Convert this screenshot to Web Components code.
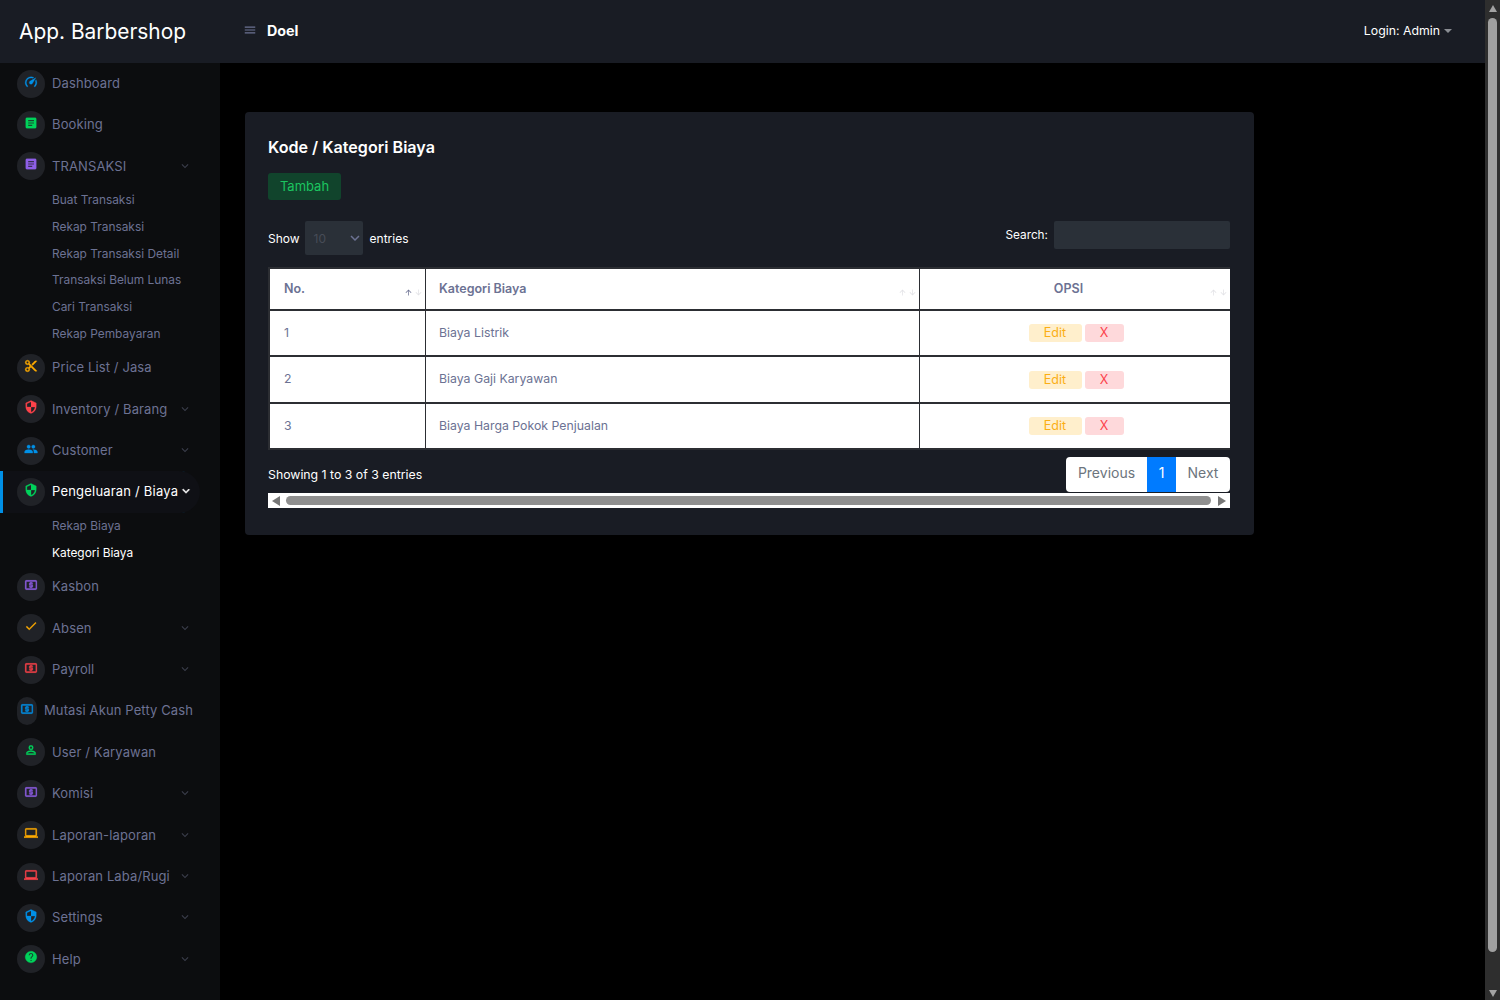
<!DOCTYPE html>
<html lang="en">
<head>
<meta charset="UTF-8">
<title>App. Barbershop</title>
<style>
  html { background: #000; }
  body { margin: 0; height: 100vh; overflow: hidden; display: flex; background: #000; font-family: Inter, "Liberation Sans", sans-serif; color: #fff; }
  app-shell { flex: 1; min-width: 0; }
</style>
</head>
<body>
<app-shell>
  <top-bar slot="top" brand="App. Barbershop" user="Doel" login="Login: Admin"></top-bar>
  <side-bar slot="side">
    <nav-item icon="speed" color="#0090e7" label="Dashboard"></nav-item>
    <nav-item icon="note" color="#00d25b" label="Booking"></nav-item>
    <nav-item icon="note" color="#8f5fe8" label="TRANSAKSI" chevron>
      <sub-item>Buat Transaksi</sub-item>
      <sub-item>Rekap Transaksi</sub-item>
      <sub-item>Rekap Transaksi Detail</sub-item>
      <sub-item>Transaksi Belum Lunas</sub-item>
      <sub-item>Cari Transaksi</sub-item>
      <sub-item>Rekap Pembayaran</sub-item>
    </nav-item>
    <nav-item icon="cut" color="#ffab00" label="Price List / Jasa"></nav-item>
    <nav-item icon="shield" color="#fc424a" label="Inventory / Barang" chevron></nav-item>
    <nav-item icon="people" color="#0090e7" label="Customer" chevron></nav-item>
    <nav-item icon="shield" color="#00d25b" label="Pengeluaran / Biaya" chevron active>
      <sub-item>Rekap Biaya</sub-item>
      <sub-item active>Kategori Biaya</sub-item>
    </nav-item>
    <nav-item icon="cash" color="#8f5fe8" label="Kasbon"></nav-item>
    <nav-item icon="check" color="#ffab00" label="Absen" chevron></nav-item>
    <nav-item icon="cash" color="#fc424a" label="Payroll" chevron></nav-item>
    <nav-item icon="cash" color="#0090e7" label="Mutasi Akun Petty Cash" squeezed></nav-item>
    <nav-item icon="user" color="#00d25b" label="User / Karyawan"></nav-item>
    <nav-item icon="cash" color="#8f5fe8" label="Komisi" chevron></nav-item>
    <nav-item icon="laptop" color="#ffab00" label="Laporan-laporan" chevron></nav-item>
    <nav-item icon="laptop" color="#fc424a" label="Laporan Laba/Rugi" chevron></nav-item>
    <nav-item icon="shield" color="#0090e7" label="Settings" chevron></nav-item>
    <nav-item icon="help" color="#00d25b" label="Help" chevron></nav-item>
  </side-bar>
  <category-card slot="main"></category-card>
</app-shell>
<page-scrollbar></page-scrollbar>

<script>
const ICONS = {
  speed: 'M12,16A3,3 0 0,1 9,13C9,11.88 9.61,10.9 10.5,10.39L20.21,4.77L14.68,14.35C14.18,15.33 13.17,16 12,16M12,3C13.81,3 15.5,3.5 16.97,4.32L14.87,5.53C14,5.19 13,5 12,5A8,8 0 0,0 4,13C4,15.21 4.89,17.21 6.34,18.65H6.35C6.74,19.04 6.74,19.67 6.35,20.06C5.96,20.45 5.32,20.45 4.93,20.07V20.07C3.12,18.26 2,15.76 2,13A10,10 0 0,1 12,3M22,13C22,15.76 20.88,18.26 19.07,20.07V20.07C18.68,20.45 18.05,20.45 17.66,20.06C17.27,19.67 17.27,19.04 17.66,18.65V18.65C19.11,17.2 20,15.21 20,13C20,12 19.81,11 19.46,10.1L20.68,8C21.5,9.5 22,11.18 22,13Z',
  note: 'M14,17H7V15H14M17,13H7V11H17M17,9H7V7H17M19,3H5C3.89,3 3,3.89 3,5V19A2,2 0 0,0 5,21H19A2,2 0 0,0 21,19V5C21,3.89 20.1,3 19,3Z',
  cut: 'M19,3L13,9L15,11L22,4V3M12,12.5A0.5,0.5 0 0,1 11.5,12A0.5,0.5 0 0,1 12,11.5A0.5,0.5 0 0,1 12.5,12A0.5,0.5 0 0,1 12,12.5M6,20A2,2 0 0,1 4,18C4,16.89 4.9,16 6,16A2,2 0 0,1 8,18C8,19.11 7.1,20 6,20M6,8A2,2 0 0,1 4,6C4,4.89 4.9,4 6,4A2,2 0 0,1 8,6C8,7.11 7.1,8 6,8M9.64,7.64C9.87,7.14 10,6.59 10,6A4,4 0 0,0 6,2A4,4 0 0,0 2,6A4,4 0 0,0 6,10C6.59,10 7.14,9.87 7.64,9.64L10,12L7.64,14.36C7.14,14.13 6.59,14 6,14A4,4 0 0,0 2,18A4,4 0 0,0 6,22A4,4 0 0,0 10,18C10,17.41 9.87,16.86 9.64,16.36L12,14L19,21H22V20L9.64,7.64Z',
  shield: 'M12,12H19C18.47,16.11 15.72,19.78 12,20.92V12H5V6.3L12,3.19M12,1L3,5V11C3,16.55 6.84,21.73 12,23C17.16,21.73 21,16.55 21,11V5L12,1Z',
  people: 'M16,13C15.71,13 15.38,13 15.03,13.05C16.19,13.89 17,15 17,16.5V19H23V16.5C23,14.17 18.33,13 16,13M8,13C5.67,13 1,14.17 1,16.5V19H15V16.5C15,14.17 10.33,13 8,13M8,11A3,3 0 0,0 11,8A3,3 0 0,0 8,5A3,3 0 0,0 5,8A3,3 0 0,0 8,11M16,11A3,3 0 0,0 19,8A3,3 0 0,0 16,5A3,3 0 0,0 13,8A3,3 0 0,0 16,11Z',
  cash: 'M20,18H4V6H20M20,4H4C2.89,4 2,4.89 2,6V18A2,2 0 0,0 4,20H20A2,2 0 0,0 22,18V6C22,4.89 21.1,4 20,4M11,17H13V16H14A1,1 0 0,0 15,15V12A1,1 0 0,0 14,11H11V10H15V8H13V7H11V8H10A1,1 0 0,0 9,9V12A1,1 0 0,0 10,13H13V14H9V16H11V17Z',
  check: 'M21,7L9,19L3.5,13.5L4.91,12.09L9,16.17L19.59,5.59L21,7Z',
  user: 'M12,4A4,4 0 0,1 16,8A4,4 0 0,1 12,12A4,4 0 0,1 8,8A4,4 0 0,1 12,4M12,6A2,2 0 0,0 10,8A2,2 0 0,0 12,10A2,2 0 0,0 14,8A2,2 0 0,0 12,6M12,13C14.67,13 20,14.33 20,17V20H4V17C4,14.33 9.33,13 12,13M12,14.9C9.03,14.9 5.9,16.36 5.9,17V18.1H18.1V17C18.1,16.36 14.97,14.9 12,14.9Z',
  laptop: 'M4,6H20V16H4M20,18A2,2 0 0,0 22,16V6C22,4.89 21.1,4 20,4H4C2.89,4 2,4.89 2,6V16A2,2 0 0,0 4,18H0V20H24V18H20Z',
  help: 'M15.07,11.25L14.17,12.17C13.45,12.89 13,13.5 13,15H11V14.5C11,13.39 11.45,12.39 12.17,11.67L13.41,10.41C13.78,10.05 14,9.55 14,9C14,7.89 13.1,7 12,7A2,2 0 0,0 10,9H8A4,4 0 0,1 12,5A4,4 0 0,1 16,9C16,9.88 15.64,10.67 15.07,11.25M13,19H11V17H13M12,2A10,10 0 0,0 2,12A10,10 0 0,0 12,22A10,10 0 0,0 22,12C22,6.47 17.5,2 12,2Z',
  chevron: 'M7.41,8.58L12,13.17L16.59,8.58L18,10L12,16L6,10L7.41,8.58Z',
  menu: 'M3,6H21V8H3V6M3,11H21V13H3V11M3,16H21V18H3V16Z',
  up: 'M13,20H11V8L5.5,13.5L4.08,12.08L12,4.16L19.92,12.08L18.5,13.5L13,8V20Z',
  down: 'M11,4H13V16L18.5,10.5L19.92,11.92L12,19.84L4.08,11.92L5.5,10.5L11,16V4Z'
};
const svg = (name, size, color, stroke = 0) =>
  `<svg width="${size}" height="${size}" viewBox="0 0 24 24" fill="${color}" stroke="${stroke ? color : 'none'}" stroke-width="${stroke}"><path d="${ICONS[name]}"/></svg>`;

class AppShell extends HTMLElement {
  constructor() {
    super();
    this.attachShadow({ mode: 'open' }).innerHTML = `
      <style>
        :host { display: grid; grid-template-columns: 220px 1fr; grid-template-rows: 63px 1fr; height: 100vh; }
        .top { grid-column: 1 / 3; }
        .main { padding: 49px 25px 0; }
      </style>
      <div class="top"><slot name="top"></slot></div>
      <slot name="side"></slot>
      <div class="main"><slot name="main"></slot></div>`;
  }
}

class TopBar extends HTMLElement {
  constructor() {
    super();
    this.attachShadow({ mode: 'open' });
  }
  connectedCallback() {
    this.shadowRoot.innerHTML = `
      <style>
        :host { display: flex; align-items: center; height: 63px; background: #191c24; }
        .brand { width: 220px; box-sizing: border-box; padding-left: 19px; font-size: 20.9px; font-weight: 400; color: #fff; }
        .toggle { display: flex; margin: -3px 10px 0 23px; }
        .user { margin-top: -2px; font-size: 14.3px; font-weight: 700; color: #fff; }
        .login { margin: -2px 33px 0 auto; display: flex; align-items: center; gap: 4px; font-size: 12.3px; color: #fff; }
        .caret { width: 0; height: 0; border-top: 4px solid #8a8d93; border-left: 4px solid transparent; border-right: 4px solid transparent; }
      </style>
      <div class="brand">${this.getAttribute('brand')}</div>
      <span class="toggle">${svg('menu', 14, '#6c7293')}</span>
      <span class="user">${this.getAttribute('user')}</span>
      <div class="login">${this.getAttribute('login')}<span class="caret"></span></div>`;
  }
}

class SideBar extends HTMLElement {
  constructor() {
    super();
    this.attachShadow({ mode: 'open' }).innerHTML = `
      <style>
        :host { display: block; background: #0c0d0f; }
      </style>
      <slot></slot>`;
  }
}

class NavItem extends HTMLElement {
  constructor() {
    super();
    this.attachShadow({ mode: 'open' });
  }
  connectedCallback() {
    const active = this.hasAttribute('active');
    const squeezed = this.hasAttribute('squeezed');
    const chev = this.hasAttribute('chevron')
      ? `<span class="chev">${svg('chevron', 14, active ? '#fff' : '#3a3d4a', active ? 1 : 0)}</span>` : '';
    this.shadowRoot.innerHTML = `
      <style>
        :host { display: block; }
        .row { display: flex; align-items: center; height: 41.4px; box-sizing: border-box; margin-right: 20px; padding: 0 0 1.4px 17px; border-radius: 0 21px 21px 0; }
        .row.active { background: #0f1015; box-shadow: inset 3px 0 0 #0090e7; }
        .dot { flex: none; width: 28px; height: 28px; margin: 1.4px 7px 0 0; border-radius: 50%; background: #202227; display: flex; align-items: center; justify-content: center; }
        .dot svg { margin-top: -4px; }
        .squeezed .dot { width: 20px; margin-right: 7px; border-radius: 10px; }
        .label { font-size: 13px; letter-spacing: .12px; color: #6c7293; white-space: nowrap; }
        .active .label { color: #fff; letter-spacing: .2px; }
        .chev { display: flex; margin-left: auto; margin-right: 8px; }
        .active .chev { margin-left: 1px; margin-right: 0; }
        ::slotted(sub-item) { display: block; }
      </style>
      <div class="row ${active ? 'active' : ''} ${squeezed ? 'squeezed' : ''}">
        <span class="dot">${svg(this.getAttribute('icon'), 14, this.getAttribute('color'), .5)}</span>
        <span class="label">${this.getAttribute('label')}</span>
        ${chev}
      </div>
      <slot></slot>`;
  }
}

class SubItem extends HTMLElement {
  constructor() {
    super();
    this.attachShadow({ mode: 'open' }).innerHTML = `
      <style>
        :host { display: block; height: 26.7px; line-height: 26.7px; padding-left: 52px; font-size: 11.9px; color: #6c7293; white-space: nowrap; }
        :host([active]) { color: #fff; }
      </style>
      <slot></slot>`;
  }
}

class CategoryCard extends HTMLElement {
  constructor() {
    super();
    this.attachShadow({ mode: 'open' }).innerHTML = `
      <style>
        :host { display: block; box-sizing: border-box; width: 1009px; padding: 26px 24px 27px 23px; background: #191c24; border-radius: 4px; }
        h4 { margin: 0; font-size: 16.1px; line-height: 19px; font-weight: 600; color: #fff; }
        .add { display: inline-block; box-sizing: border-box; margin-top: 16px; height: 27px; line-height: 27px; width: 73px; text-align: center; font-size: 13px; color: #1cc560; background: #11442c; border-radius: 3px; }
        .tools { display: flex; justify-content: space-between; margin-top: 21px; height: 46px; font-size: 12px; color: #fff; }
        .show { display: flex; align-items: center; gap: 6px; height: 34px; }
        .select { box-sizing: border-box; width: 58px; height: 34px; margin: 0 1px 0 -1px; padding: 0 0 0 9px; display: flex; align-items: center; justify-content: space-between; background: #2a3038; border-radius: 2px; color: #474c57; }
        .select svg { margin-right: -1px; }
        .search { display: flex; align-items: flex-start; gap: 6px; height: 28px; font-size: 11.8px; line-height: 28px; }
        .input { width: 176px; height: 28px; background: #2a3038; border-radius: 2px; }
        .foot { display: flex; justify-content: space-between; align-items: center; margin-top: 7px; height: 35px; font-size: 12.3px; }
      </style>
      <h4>Kode / Kategori Biaya</h4>
      <div class="add">Tambah</div>
      <div class="tools">
        <div class="show">Show <span class="select">10 ${svg('chevron', 18, '#6c7293')}</span> entries</div>
        <div class="search">Search: <span class="input"></span></div>
      </div>
      <cost-table></cost-table>
      <div class="foot">
        <span>Showing 1 to 3 of 3 entries</span>
        <page-nav></page-nav>
      </div>
      <bottom-scroll></bottom-scroll>`;
  }
}

class CostTable extends HTMLElement {
  constructor() {
    super();
    const rows = ['Biaya Listrik', 'Biaya Gaji Karyawan', 'Biaya Harga Pokok Penjualan'];
    const arrows = (on) => `<span class="sort">${svg('up', 9, on ? '#6c7293' : '#e2e2e6')}${svg('down', 9, '#e2e2e6')}</span>`;
    this.attachShadow({ mode: 'open' }).innerHTML = `
      <style>
        :host { display: block; }
        table { width: 962px; table-layout: fixed; border-collapse: separate; border-spacing: 0; background: #fff; font-size: 12.3px; color: #6c7293; border-top: 2px solid #2c2e33; border-left: 2px solid #2c2e33; }
        th, td { box-sizing: border-box; padding: 0 14px 0 13px; text-align: left; border-right: 1px solid #2c2e33; border-bottom: 2px solid #2c2e33; }
        th:first-child, td:first-child { padding-left: 14px; }
        td:not(:last-child) { padding-bottom: 1.5px; }
        th:last-child, td:last-child { border-right: 0; text-align: center; }
        td:last-child { padding: 0 13px 0 15px; }
        th { height: 42px; padding-bottom: 1.5px; position: relative; font-size: 12.5px; font-weight: 600; }
        th:last-child { padding-right: 26px; }
        tbody tr { height: 46px; }
        tbody tr:nth-child(2) { height: 47px; }
        .sort { position: absolute; right: 2px; bottom: 12px; display: flex; gap: 1px; }
        .btn { display: inline-block; height: 18px; line-height: 18px; text-align: center; font-size: 12.5px; border-radius: 3px; }
        .edit { width: 53px; background: #ffefcc; color: #fbae14; margin-right: 3px; }
        .del { width: 39px; background: #fed9db; color: #fc424a; }
      </style>
      <table>
        <colgroup><col style="width:156px"><col style="width:494px"><col></colgroup>
        <thead><tr><th>No.${arrows(true)}</th><th>Kategori Biaya${arrows()}</th><th>OPSI${arrows()}</th></tr></thead>
        <tbody>
          ${rows.map((r, i) => `<tr><td>${i + 1}</td><td>${r}</td><td><span class="btn edit">Edit</span><span class="btn del">X</span></td></tr>`).join('')}
        </tbody>
      </table>`;
  }
}

class PageNav extends HTMLElement {
  constructor() {
    super();
    this.attachShadow({ mode: 'open' }).innerHTML = `
      <style>
        :host { display: flex; height: 35px; background: #fff; border-radius: 4px; overflow: hidden; font-size: 14px; line-height: 32px; color: #6c757d; }
        span { box-sizing: border-box; text-align: center; }
        .cur { background: #007bff; color: #fff; }
      </style>
      <span style="width:81px">Previous</span><span class="cur" style="width:29px">1</span><span style="width:54px">Next</span>`;
  }
}

class BottomScroll extends HTMLElement {
  constructor() {
    super();
    this.attachShadow({ mode: 'open' }).innerHTML = `
      <style>
        :host { display: flex; align-items: center; box-sizing: border-box; margin-top: 1px; height: 15px; padding: 0 4px; background: #fff; }
        .left { width: 0; height: 0; border: 5px solid transparent; border-left: 0; border-right: 8px solid #777; }
        .right { width: 0; height: 0; border: 5px solid transparent; border-right: 0; border-left: 8px solid #777; }
        .thumb { flex: none; width: 925px; height: 9px; margin: 0 7px 0 6px; background: #8f8f8f; border-radius: 5px; }
      </style>
      <span class="left"></span><span class="thumb"></span><span class="right"></span>`;
  }
}

class PageScrollbar extends HTMLElement {
  constructor() {
    super();
    this.attachShadow({ mode: 'open' }).innerHTML = `
      <style>
        :host { flex: none; display: flex; flex-direction: column; align-items: center; box-sizing: border-box; width: 15px; height: 100vh; padding: 5px 0 3px; background: #2e2e2e; }
        .up { width: 0; height: 0; border: 4.5px solid transparent; border-top: 0; border-bottom: 7px solid #a3a3a3; }
        .down { width: 0; height: 0; border: 4.5px solid transparent; border-bottom: 0; border-top: 7px solid #a3a3a3; }
        .thumb { width: 9px; height: 934px; margin: 6px 0 38px; background: #a0a0a0; border-radius: 5px; }
      </style>
      <span class="up"></span><span class="thumb"></span><span class="down"></span>`;
  }
}

customElements.define('app-shell', AppShell);
customElements.define('top-bar', TopBar);
customElements.define('side-bar', SideBar);
customElements.define('nav-item', NavItem);
customElements.define('sub-item', SubItem);
customElements.define('category-card', CategoryCard);
customElements.define('cost-table', CostTable);
customElements.define('page-nav', PageNav);
customElements.define('bottom-scroll', BottomScroll);
customElements.define('page-scrollbar', PageScrollbar);
</script>
</body>
</html>
